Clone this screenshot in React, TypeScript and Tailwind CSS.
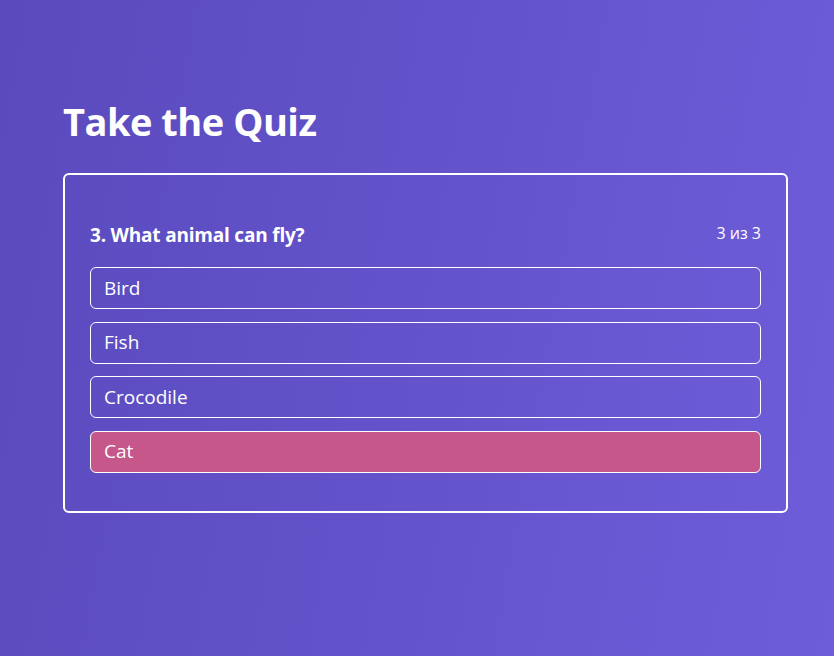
import React from 'react';

const options = ['Bird', 'Fish', 'Crocodile', 'Cat'];

const App = () => {
  const selected = 'Cat';
  return (
    <div
      className="min-h-[656px] w-full bg-[linear-gradient(100deg,#5a4abd_0%,#6d5dd9_100%)] text-white pl-[63px] pr-[46px] pt-[97px]"
      style={{ fontFamily: '"Open Sans", "Noto Sans", sans-serif' }}
    >
      <h1 className="text-[38px] font-bold leading-[48px] tracking-[-0.5px]">Take the Quiz</h1>

      {/* Question card */}
      <div className="mt-[28px] border-2 border-white rounded-[6px] px-[25px] pt-[47px] pb-[38px]">
        <div className="flex justify-between items-center mb-[19px]">
          <h2 className="text-[19px] font-bold leading-[26px] tracking-[-0.2px]">3. What animal can fly?</h2>
          <span className="text-[16px] leading-[22px] -mt-[5px]">3 из 3</span>
        </div>
        <div className="flex flex-col gap-[12.5px]">
          {options.map((o) => (
            <button
              key={o}
              className={
                'h-[42px] w-full text-left px-[13px] border border-white rounded-[6px] text-[19px] ' +
                (o === selected ? 'bg-[#c5578a]' : 'bg-transparent')
              }
            >
              {o}
            </button>
          ))}
        </div>
      </div>
    </div>
  );
};

export default App;
